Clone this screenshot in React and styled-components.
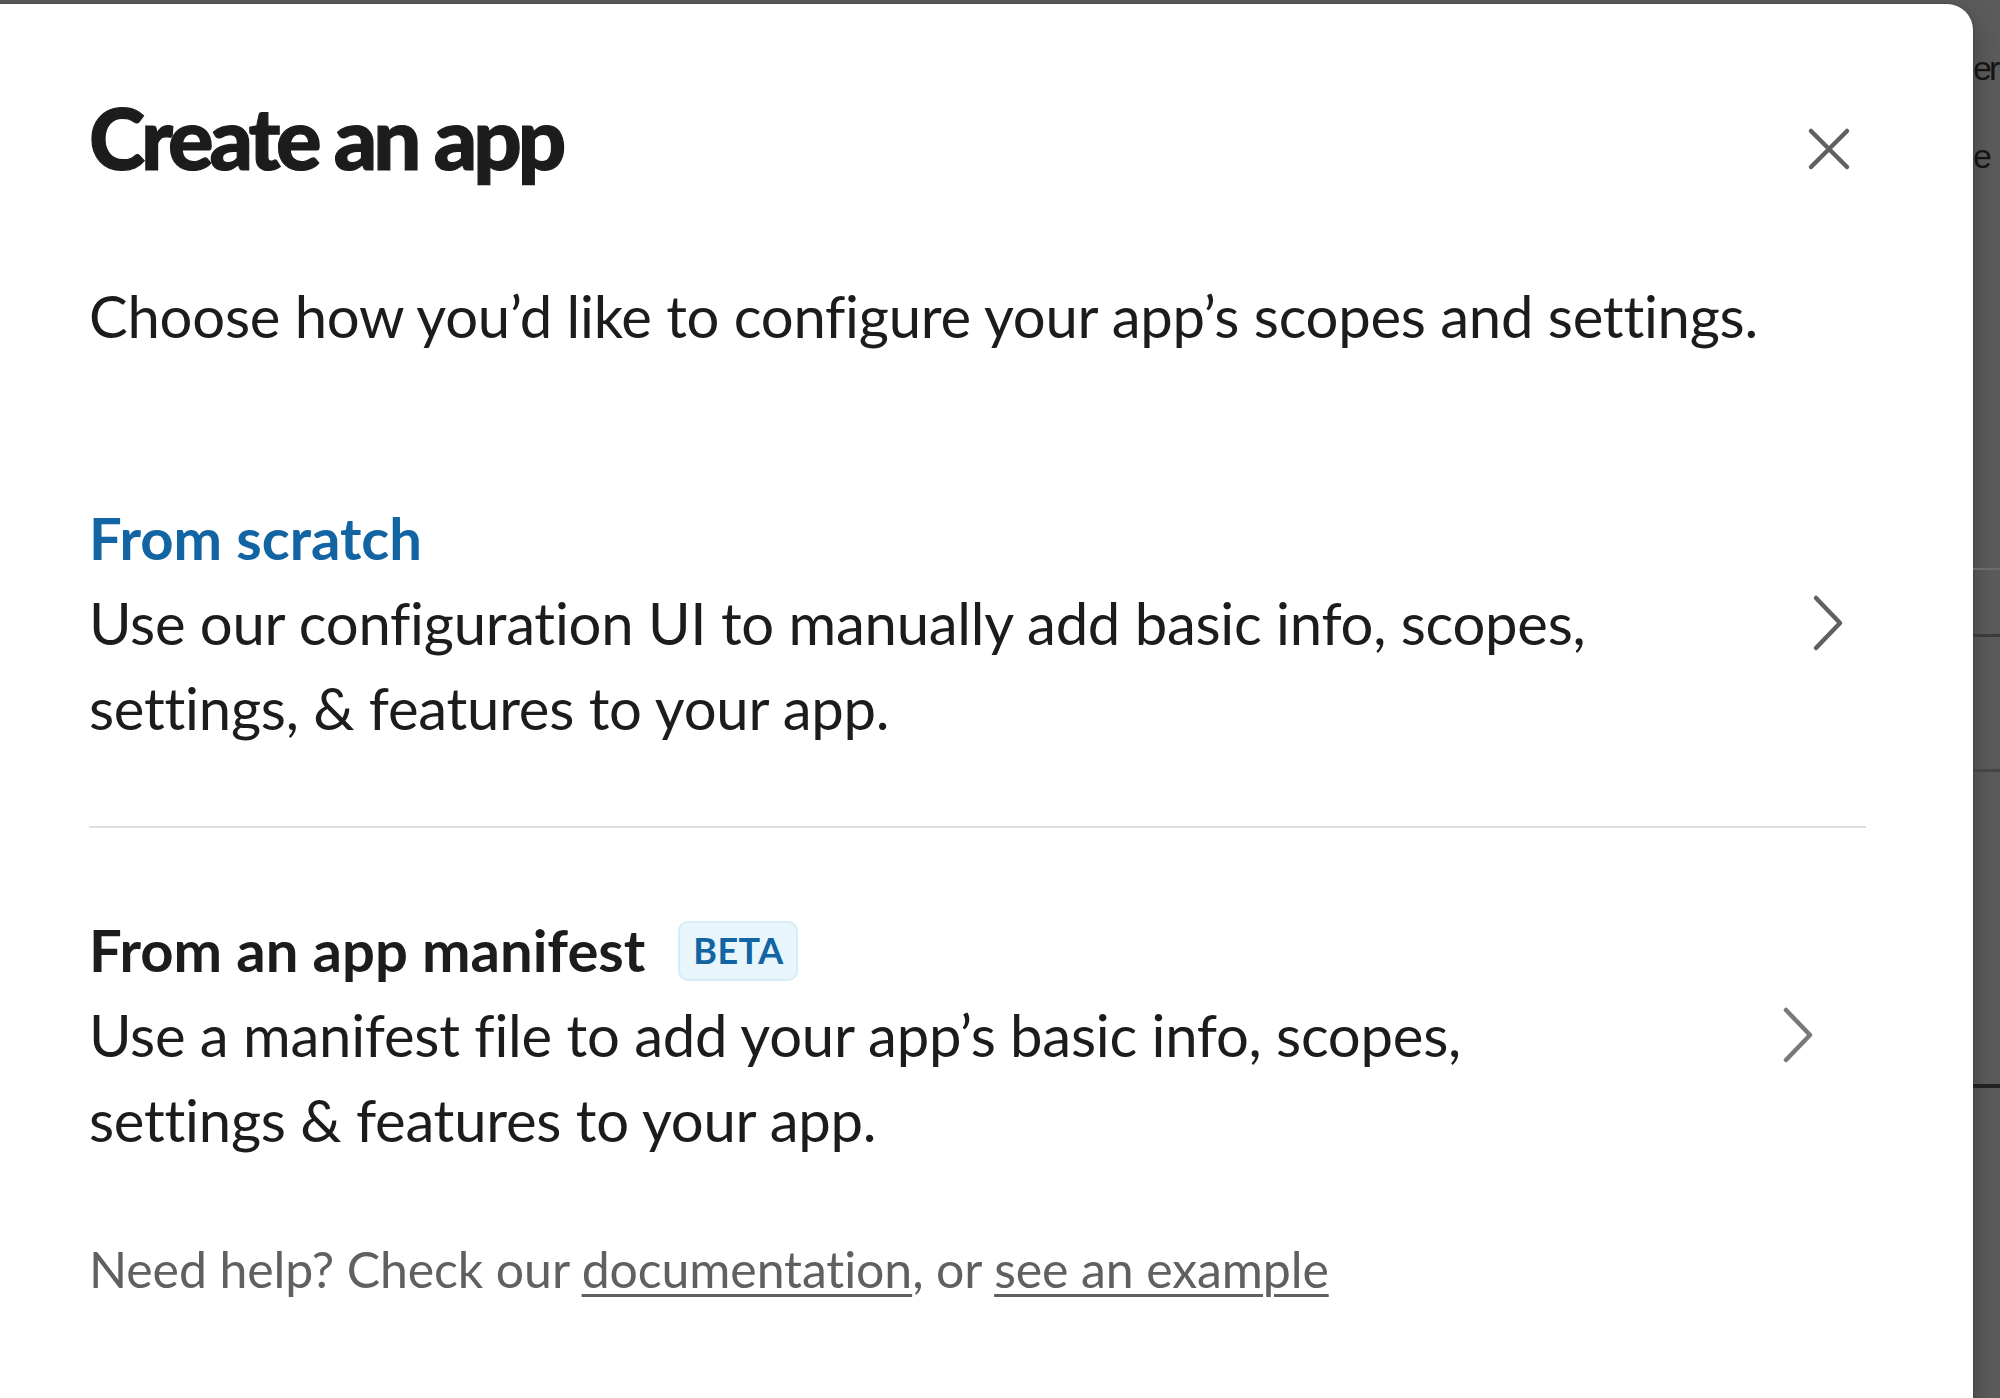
import React from "react";
import styled, { createGlobalStyle } from "styled-components";

const Global = createGlobalStyle`
  html, body { margin: 0; padding: 0; }
  body {
    background: #5b5b5b;
    overflow: hidden;
    font-family: Lato, "Noto Sans", "Liberation Sans", sans-serif;
    -webkit-font-smoothing: antialiased;
  }
`;

const Page = styled.div`
  display: flex;
  align-items: flex-start;
  width: 2000px;
  height: 1398px;
  overflow: hidden;
`;

const Modal = styled.div`
  flex: none;
  box-sizing: border-box;
  width: 2005px;
  min-height: 1500px;
  margin: 4px 0 0 -32px;
  padding: 82px 107px 0 121px;
  background: #ffffff;
  border-radius: 26px;
  box-shadow: 0 0 0 1px rgba(0, 0, 0, 0.08), 0 8px 24px rgba(0, 0, 0, 0.3);
  color: #1d1c1d;
`;

const Header = styled.div`
  display: flex;
  align-items: center;
  justify-content: space-between;
`;

const Title = styled.h1`
  margin: 0;
  font-size: 85px;
  line-height: 102px;
  font-weight: 900;
  letter-spacing: -4px;
  -webkit-text-stroke: 1.2px #1d1c1d;
  color: #1d1c1d;
`;

const CloseButton = styled.button`
  display: flex;
  align-items: center;
  justify-content: center;
  width: 60px;
  height: 60px;
  margin: 24px 7px 0 0;
  padding: 0;
  border: none;
  background: transparent;
  color: #616061;
  cursor: pointer;
`;

const Lead = styled.p`
  margin: 85px 0 0;
  font-size: 58px;
  line-height: 85px;
  font-weight: 400;
  letter-spacing: -0.25px;
`;

const Options = styled.div`
  display: flex;
  flex-direction: column;
  margin-top: 137px;
`;

const Option = styled.div`
  display: flex;
  align-items: center;
  justify-content: space-between;
  padding: ${(p) => p.$pad};
  border-bottom: ${(p) => (p.$divider ? "2px solid #dedede" : "none")};
  cursor: pointer;
`;

const OptionText = styled.div`
  display: flex;
  flex-direction: column;
  max-width: 1520px;
`;

const OptionTitle = styled.div`
  display: flex;
  align-items: center;
  gap: 33px;
  font-size: 58px;
  line-height: 85px;
  font-weight: 700;
  color: ${(p) => (p.$accent ? "#1264a3" : "#1d1c1d")};
`;

const Badge = styled.span`
  display: inline-flex;
  align-items: center;
  justify-content: center;
  box-sizing: border-box;
  width: 120px;
  height: 60px;
  margin-top: 2px;
  border-radius: 10px;
  background: #e8f5fa;
  border: 2px solid #d6ecf6;
  color: #1264a3;
  font-size: 36px;
  font-weight: 700;
  letter-spacing: 0.5px;
`;

const OptionDesc = styled.div`
  font-size: 58px;
  line-height: 85px;
  font-weight: 400;
  letter-spacing: -0.25px;
  color: #1d1c1d;
`;

const Chevron = styled.span`
  display: flex;
  flex: none;
  margin-right: ${(p) => p.$inset}px;
  color: ${(p) => p.$color};
`;

const Help = styled.p`
  margin: 71px 0 0;
  font-size: 50px;
  line-height: 73px;
  letter-spacing: -0.1px;
  color: #616061;
`;

const HelpLink = styled.a`
  color: #616061;
  text-decoration: underline;
  text-decoration-thickness: 3px;
  text-underline-offset: 6px;
`;

const Behind = styled.div`
  flex: 1;
  display: flex;
  flex-direction: column;
  overflow: hidden;
  white-space: nowrap;
  font-family: "Liberation Sans", Arial, sans-serif;
  color: #141414;
`;

const BehindText = styled.div`
  font-size: 34px;
  line-height: 44px;
  letter-spacing: -3px;
  margin: ${(p) => p.$m};
`;

const BehindLine = styled.div`
  height: ${(p) => p.$h}px;
  margin-top: ${(p) => p.$top}px;
  background: ${(p) => p.$c};
`;

const XIcon = () => (
  <svg width="44" height="44" viewBox="0 0 44 44" fill="none">
    <path d="M4 4 L40 40 M40 4 L4 40" stroke="currentColor" strokeWidth="4.5" strokeLinecap="round" />
  </svg>
);

const ChevronIcon = () => (
  <svg width="32" height="58" viewBox="0 0 32 58" fill="none">
    <path d="M4 4 L28 29 L4 54" stroke="currentColor" strokeWidth="4.5" strokeLinecap="round" strokeLinejoin="round" />
  </svg>
);

export default function App() {
  return (
    <>
      <Global />
      <Page>
        <Modal>
          <Header>
            <Title>Create an app</Title>
            <CloseButton aria-label="Close">
              <XIcon />
            </CloseButton>
          </Header>
          <Lead>Choose how you’d like to configure your app’s scopes and settings.</Lead>
          <Options>
            <Option $divider $pad="0 22px 76px 0">
              <OptionText>
                <OptionTitle $accent>From scratch</OptionTitle>
                <OptionDesc>
                  Use our configuration UI to manually add basic info, scopes,
                  <br />
                  settings, &amp; features to your app.
                </OptionDesc>
              </OptionText>
              <Chevron $inset={0} $color="#616061">
                <ChevronIcon />
              </Chevron>
            </Option>
            <Option $pad="79px 22px 0 0">
              <OptionText>
                <OptionTitle>
                  From an app manifest
                  <Badge>BETA</Badge>
                </OptionTitle>
                <OptionDesc>
                  Use a manifest file to add your app’s basic info, scopes,
                  <br />
                  settings &amp; features to your app.
                </OptionDesc>
              </OptionText>
              <Chevron $inset={30} $color="#7a797a">
                <ChevronIcon />
              </Chevron>
            </Option>
          </Options>
          <Help>
            Need help? Check our <HelpLink href="#">documentation</HelpLink>, or{" "}
            <HelpLink href="#">see an example</HelpLink>
          </Help>
        </Modal>
        <Behind>
          <BehindText $m="46px 0 0 0">er</BehindText>
          <BehindText $m="44px 0 0 0">e</BehindText>
          <BehindLine $top={390} $h={2} $c="#6b6b6b" />
          <BehindLine $top={64} $h={3} $c="#3a3a3a" />
          <BehindLine $top={132} $h={3} $c="#444444" />
          <BehindLine $top={312} $h={4} $c="#222222" />
        </Behind>
      </Page>
    </>
  );
}
